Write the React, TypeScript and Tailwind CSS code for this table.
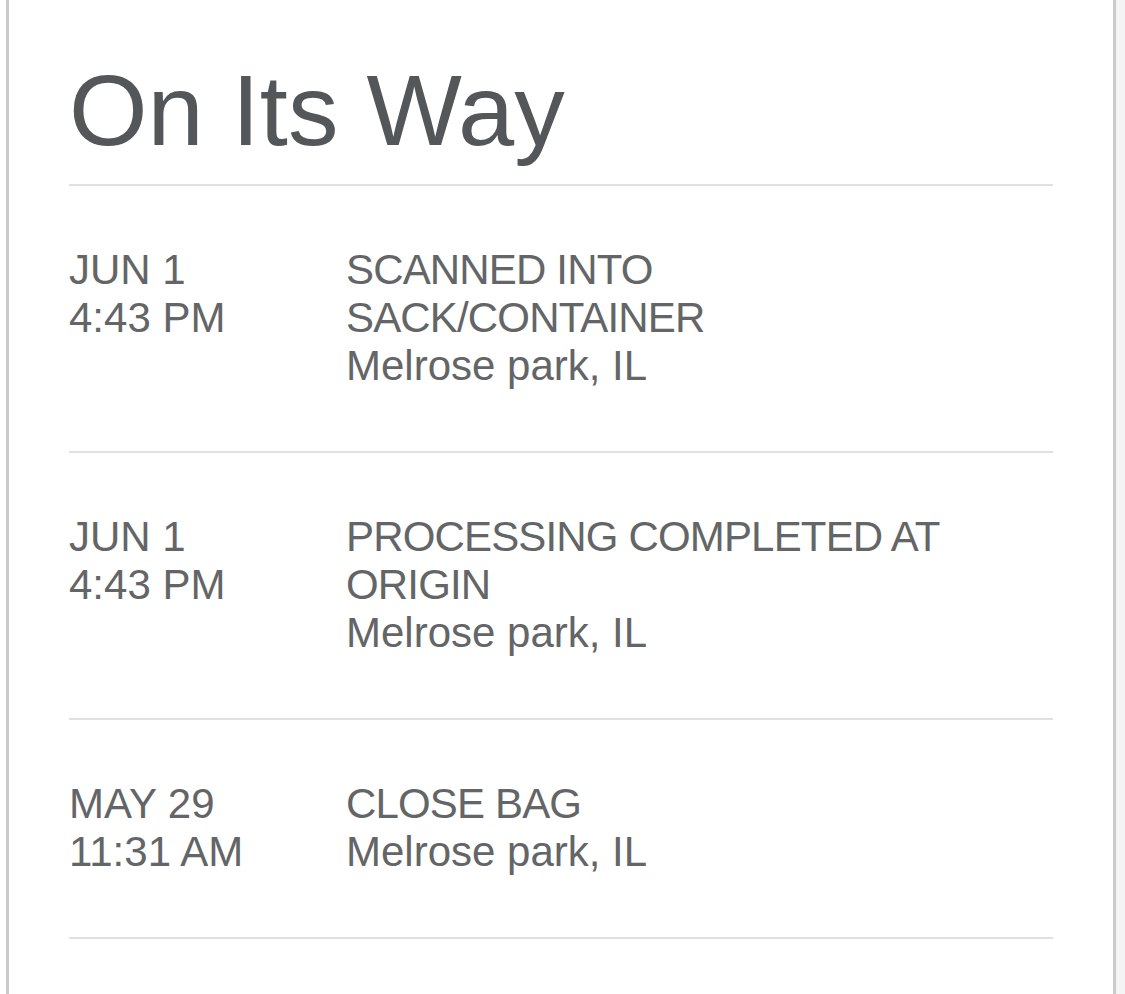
const events = [
  {
    date: "JUN 1",
    time: "4:43 PM",
    status: "SCANNED INTO SACK/CONTAINER",
    place: "Melrose park, IL",
  },
  {
    date: "JUN 1",
    time: "4:43 PM",
    status: "PROCESSING COMPLETED AT ORIGIN",
    place: "Melrose park, IL",
  },
  {
    date: "MAY 29",
    time: "11:31 AM",
    status: "CLOSE BAG",
    place: "Melrose park, IL",
  },
];

function TrackingRow({
  date,
  time,
  status,
  place,
}: {
  date: string;
  time: string;
  status: string;
  place: string;
}) {
  return (
    <div className="grid grid-cols-[277px_660px] pt-[60px] pb-[61px] border-b-2 border-[#e0e0e0] text-[42px] leading-[48px] text-[#636567]">
      <div>
        <p>{date}</p>
        <p>{time}</p>
      </div>
      <div>
        <p className="tracking-[-0.02em]">{status}</p>
        <p>{place}</p>
      </div>
    </div>
  );
}

export default function App() {
  return (
    <div
      className="flex h-[994px] w-full overflow-hidden bg-white"
      style={{ fontFamily: '"Liberation Sans", Arial, sans-serif' }}
    >
      <div className="w-[6px] shrink-0 bg-white" />
      <div className="w-[1110px] shrink-0 border-x-[3px] border-[#cbcbcb] bg-white px-[60px]">
        <h1 className="pt-[60px] pb-[23px] border-b-2 border-[#e0e0e0] text-[101px] leading-none text-[#53575a]">
          On Its Way
        </h1>
        {events.map((e, i) => (
          <TrackingRow key={i} {...e} />
        ))}
      </div>
      <div className="flex-1 bg-[#f4f4f4]" />
    </div>
  );
}
